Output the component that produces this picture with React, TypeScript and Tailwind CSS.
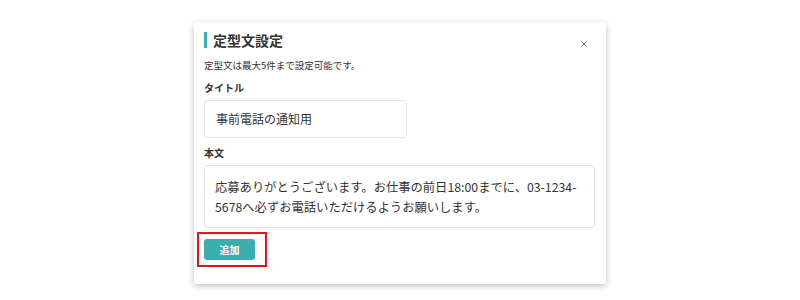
import { X } from 'lucide-react';

const font = { fontFamily: '"Noto Sans CJK JP", "Noto Sans", sans-serif' };

export default function App() {
  return (
    <div className="w-[800px] h-[300px] bg-white overflow-hidden pt-[22px] text-[#333]" style={font}>
      <div className="mx-auto w-[412px] bg-white rounded-[3px] shadow-[0_2px_6px_rgba(0,0,0,0.25)] px-[10px] pt-[10px] pb-[17px]">
        <div className="flex items-center justify-between h-[16px]">
          <div className="flex items-center gap-[6px]">
            <span className="block w-[3px] h-[16px] bg-[#3aadad]" />
            <h1 className="text-[14px] font-bold leading-[16px]">定型文設定</h1>
          </div>
          <button className="relative top-[4px] mr-[7px] text-[#555]">
            <X className="w-[10px] h-[10px]" strokeWidth={2} />
          </button>
        </div>

        <p className="mt-[10px] text-[9.5px] leading-[14px]">定型文は最大5件まで設定可能です。</p>

        <label className="block mt-[9px] text-[10px] font-bold leading-[14px]">タイトル</label>
        <div className="mt-[5px] w-[203px] h-[38px] border border-[#e3e3e3] rounded-[4px] px-[11px] flex items-center text-[12px]">
          事前電話の通知用
        </div>

        <label className="block mt-[8px] text-[10px] font-bold leading-[14px]">本文</label>
        <div className="mt-[5px] w-[391px] h-[63px] border border-[#e3e3e3] rounded-[4px] px-[10px] pt-[11px] text-[12.3px] leading-[20px]">
          応募ありがとうございます。お仕事の前日18:00までに、03-1234-5678へ必ずお電話いただけるようお願いします。
        </div>

        <div className="mt-[4px] -ml-[7px] inline-block border-2 border-[#e8141b] pl-[5px] pr-[10px] py-[5px]">
          <button className="block w-[51px] h-[21px] rounded-[3px] bg-[#3aadad] text-white text-[10px] font-bold leading-[21px]">
            追加
          </button>
        </div>
      </div>
    </div>
  );
}
